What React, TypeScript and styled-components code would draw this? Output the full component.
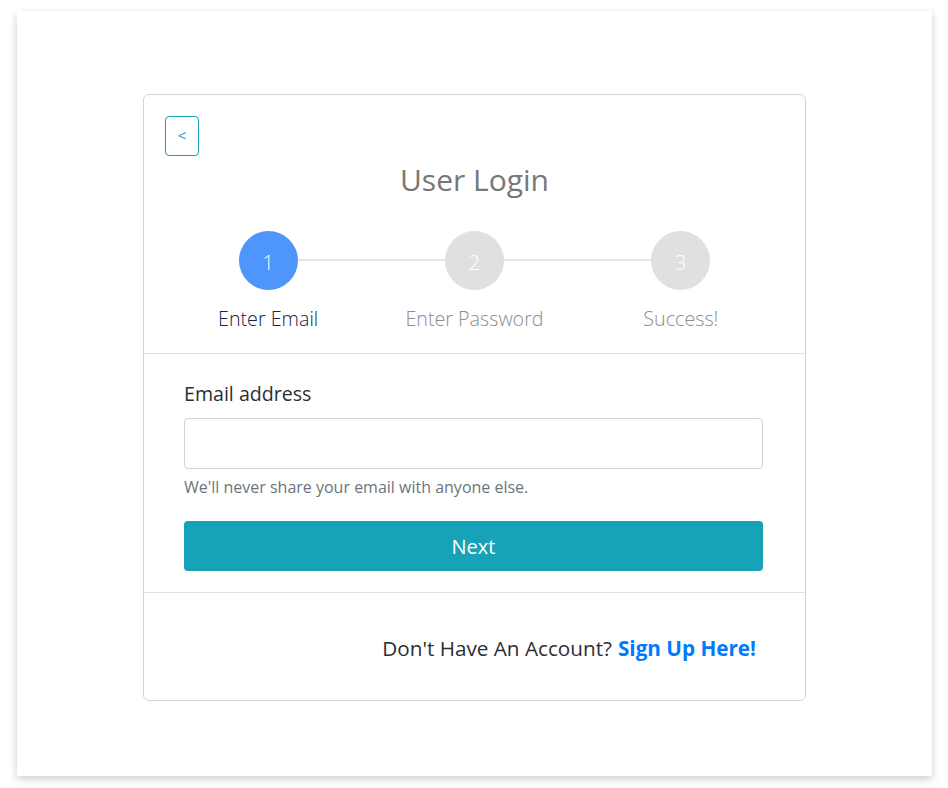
import React from 'react'
import styled, { createGlobalStyle } from 'styled-components'

const GlobalStyle = createGlobalStyle`
  html, body {
    margin: 0;
    padding: 0;
    background: #ffffff;
  }
  body {
    font-family: 'Open Sans', 'Noto Sans', sans-serif;
    color: #212529;
  }
  * {
    box-sizing: border-box;
  }
`

const Page = styled.div`
  padding: 11px 16px 12px 17px;
`

const Panel = styled.div`
  height: 765px;
  background: #ffffff;
  box-shadow: 0 3px 8px rgba(0, 0, 0, 0.2);
  display: flex;
  justify-content: center;
  padding-top: 83px;
`

const Card = styled.div`
  width: 663px;
  height: 607px;
  border: 1px solid #d3d3d3;
  border-radius: 6px;
  display: flex;
  flex-direction: column;
`

const Header = styled.div`
  padding: 21px 21px 23px;
  border-bottom: 1px solid #e2e2e2;
`

const BackButton = styled.button`
  width: 34px;
  height: 40px;
  border: 1px solid #17a2b8;
  border-radius: 4px;
  background: transparent;
  color: #17a2b8;
  font-family: 'Open Sans', sans-serif;
  font-size: 15px;
  padding: 0 0 2px;
  display: flex;
  align-items: center;
  justify-content: center;
  cursor: pointer;
`

const Title = styled.h3`
  margin: 7px 0 0;
  text-align: center;
  font-size: 30px;
  font-weight: 400;
  line-height: 34px;
  color: #777777;
`

const Steps = styled.div`
  display: grid;
  grid-template-columns: repeat(3, 1fr);
  margin-top: 34px;
`

const Step = styled.div<{ $first?: boolean }>`
  position: relative;
  display: flex;
  flex-direction: column;
  align-items: center;

  &::before {
    content: '';
    display: ${({ $first }) => ($first ? 'none' : 'block')};
    position: absolute;
    top: 28px;
    left: -50%;
    right: 50%;
    height: 2px;
    background: #e6e6e6;
  }
`

const Circle = styled.div<{ $active?: boolean }>`
  position: relative;
  z-index: 1;
  width: 59px;
  height: 59px;
  border-radius: 50%;
  background: ${({ $active }) => ($active ? '#4e95fc' : '#e0e0e0')};
  color: #ffffff;
  font-size: 20px;
  font-weight: 300;
  display: flex;
  align-items: center;
  justify-content: center;
  padding-top: 3px;
`

const StepLabel = styled.div<{ $active?: boolean }>`
  margin-top: 17px;
  font-size: 19.7px;
  font-weight: 300;
  line-height: 23px;
  color: ${({ $active }) => ($active ? '#1c2340' : '#8c8c8c')};
`

const Body = styled.div`
  padding: 26px 42px 21px 40px;
  border-bottom: 1px solid #e2e2e2;
`

const Label = styled.label`
  display: block;
  font-size: 19.6px;
  line-height: 28px;
  color: #2b2f33;
  margin-bottom: 10px;
`

const Input = styled.input`
  display: block;
  width: 100%;
  height: 51px;
  border: 1px solid #ced4da;
  border-radius: 4px;
  font-family: 'Open Sans', sans-serif;
  font-size: 18px;
  padding: 0 14px;
  outline: none;
`

const Help = styled.small`
  display: block;
  margin-top: 6px;
  font-size: 16px;
  line-height: 24px;
  color: #6c757d;
`

const PrimaryButton = styled.button`
  display: block;
  width: 100%;
  height: 50px;
  margin-top: 22px;
  border: none;
  border-radius: 4px;
  background: #17a2b8;
  color: #ffffff;
  font-family: 'Open Sans', sans-serif;
  font-size: 20px;
  cursor: pointer;
`

const Footer = styled.div`
  flex: 1;
  display: flex;
  align-items: center;
  justify-content: flex-end;
  padding: 2px 49px 0 40px;
  font-size: 20.7px;
  color: #2b2f33;
`

const SignUpLink = styled.a`
  margin-left: 6px;
  color: #007bff;
  font-weight: 700;
  text-decoration: none;
`

const steps = [
  { n: 1, label: 'Enter Email' },
  { n: 2, label: 'Enter Password' },
  { n: 3, label: 'Success!' },
]

export default function App() {
  const current = 1
  return (
    <>
      <GlobalStyle />
      <Page>
        <Panel>
          <Card>
            <Header>
              <BackButton>&lt;</BackButton>
              <Title>User Login</Title>
              <Steps>
                {steps.map((s, i) => (
                  <Step key={s.n} $first={i === 0}>
                    <Circle $active={s.n === current}>{s.n}</Circle>
                    <StepLabel $active={s.n === current}>{s.label}</StepLabel>
                  </Step>
                ))}
              </Steps>
            </Header>
            <Body>
              <Label htmlFor="email">Email address</Label>
              <Input id="email" type="email" />
              <Help>We'll never share your email with anyone else.</Help>
              <PrimaryButton>Next</PrimaryButton>
            </Body>
            <Footer>
              Don't Have An Account?
              <SignUpLink href="#">Sign Up Here!</SignUpLink>
            </Footer>
          </Card>
        </Panel>
      </Page>
    </>
  )
}
